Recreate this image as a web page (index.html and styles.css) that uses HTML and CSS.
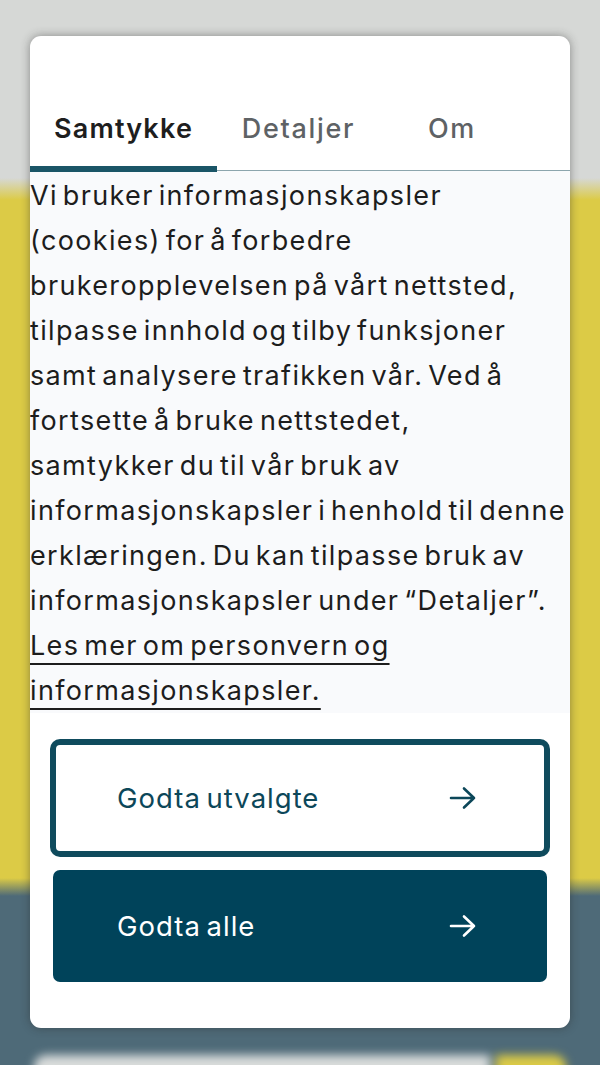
FILE: index.html
```html
<!DOCTYPE html>
<html lang="no">
<head>
<meta charset="utf-8">
<title>Samtykke</title>
<link rel="stylesheet" href="styles.css">
</head>
<body>
<div class="modal">
  <div class="tabs">
    <div class="tab active">Samtykke</div>
    <div class="tab">Detaljer</div>
    <div class="tab">Om</div>
  </div>
  <div class="content">
    <p class="text">Vi bruker informasjonskapsler<br>(cookies) for å forbedre<br>brukeropplevelsen på vårt nettsted,<br>tilpasse innhold og tilby funksjoner<br>samt analysere trafikken vår. Ved å<br>fortsette å bruke nettstedet,<br>samtykker du til vår bruk av<br>informasjonskapsler i henhold til denne<br>erklæringen. Du kan tilpasse bruk av<br>informasjonskapsler under “Detaljer”.<br><a class="link" href="#">Les mer om personvern og</a><br><a class="link" href="#">informasjonskapsler.</a></p>
  </div>
  <div class="actions">
    <button class="btn btn-outline"><span>Godta utvalgte</span>
      <svg class="arrow" viewBox="0 0 28 24" width="28" height="24"><path d="M2 12H25M15 2.5L25 12L15 21.5" fill="none" stroke="currentColor" stroke-width="2.6" stroke-linecap="round" stroke-linejoin="round"/></svg>
    </button>
    <button class="btn btn-solid"><span>Godta alle</span>
      <svg class="arrow" viewBox="0 0 28 24" width="28" height="24"><path d="M2 12H25M15 2.5L25 12L15 21.5" fill="none" stroke="currentColor" stroke-width="2.6" stroke-linecap="round" stroke-linejoin="round"/></svg>
    </button>
  </div>
</div>
<div class="under">
  <div class="under-white"></div>
  <div class="under-yellow"></div>
</div>
</body>
</html>
```
FILE: styles.css
```css
html, body {
  margin: 0;
  padding: 0;
}
body {
  width: 600px;
  height: 1065px;
  overflow: hidden;
  background: linear-gradient(to bottom, #d6d8d6 0, #d6d8d6 178px, #dccb46 200px, #dccb46 878px, #4e6a78 896px, #4e6a78 100%);
  font-family: "Inter", "Noto Sans", sans-serif;
  color: #1c1c1c;
}
.modal {
  margin: 36px 30px 0;
  width: 540px;
  background: #ffffff;
  border-radius: 11px;
  box-shadow: 0 0 10px rgba(40, 40, 40, 0.45);
  overflow: hidden;
}
.tabs {
  height: 134px;
  display: grid;
  grid-template-columns: 187px 163px 144px;
  align-items: end;
  border-bottom: 1.5px solid #8ca5ad;
}
.tab {
  text-align: center;
  font-size: 27px;
  line-height: 34px;
  font-weight: 500;
  color: #5e6265;
  letter-spacing: 1.7px;
  padding-bottom: 20px;
  border-bottom: 6px solid transparent;
  margin-bottom: -1.5px;
}
.tab.active {
  color: #1e1e1e;
  font-weight: 600;
  letter-spacing: 1.2px;
  border-bottom-color: #1a5567;
}
.content {
  background: #f9fafc;
  padding-top: 2px;
}
.text {
  margin: 0;
  font-size: 27px;
  font-weight: 400;
  line-height: 45px;
  letter-spacing: 1.35px;
  word-spacing: -4px;
  white-space: nowrap;
  color: #1d1d1d;
}
.link {
  color: #1d1d1d;
  text-decoration: underline;
  text-decoration-thickness: 2px;
  text-underline-offset: 8px;
}
.actions {
  padding: 29px 23px 46px;
  display: flex;
  flex-direction: column;
  gap: 16px;
}
.btn {
  height: 112px;
  border-radius: 7px;
  display: flex;
  align-items: center;
  justify-content: space-between;
  padding: 0 70px 0 64px;
  font-family: "Inter", "Noto Sans", sans-serif;
  font-size: 27.5px;
  font-weight: 400;
  letter-spacing: 1px;
  word-spacing: -3px;
  cursor: pointer;
}
.btn-outline {
  background: #ffffff;
  color: #0c4759;
  border: 3px solid #0f4b5d;
  box-shadow: 0 0 0 3px #0f4b5d;
  padding-left: 61px;
  padding-right: 67px;
}
.btn-solid {
  background: #00435a;
  color: #ffffff;
  border: none;
}
.arrow {
  display: block;
}
.under {
  margin: 27px 34px 0;
  display: flex;
  gap: 6px;
  height: 40px;
  filter: blur(5px);
}
.under-white {
  flex: 1;
  background: #d9dcdb;
  border-radius: 12px 0 0 0;
}
.under-yellow {
  width: 70px;
  background: #dccb46;
  border-radius: 0 12px 0 0;
}
```
